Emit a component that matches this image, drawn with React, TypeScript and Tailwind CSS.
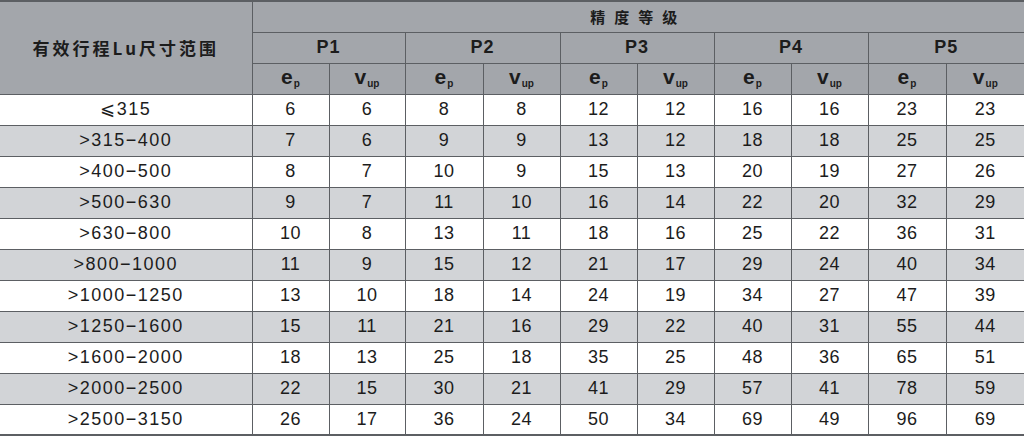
const ROWS: [string, number[]][] = [
  ["⩽315", [6, 6, 8, 8, 12, 12, 16, 16, 23, 23]],
  [">315−400", [7, 6, 9, 9, 13, 12, 18, 18, 25, 25]],
  [">400−500", [8, 7, 10, 9, 15, 13, 20, 19, 27, 26]],
  [">500−630", [9, 7, 11, 10, 16, 14, 22, 20, 32, 29]],
  [">630−800", [10, 8, 13, 11, 18, 16, 25, 22, 36, 31]],
  [">800−1000", [11, 9, 15, 12, 21, 17, 29, 24, 40, 34]],
  [">1000−1250", [13, 10, 18, 14, 24, 19, 34, 27, 47, 39]],
  [">1250−1600", [15, 11, 21, 16, 29, 22, 40, 31, 55, 44]],
  [">1600−2000", [18, 13, 25, 18, 35, 25, 48, 36, 65, 51]],
  [">2000−2500", [22, 15, 30, 21, 41, 29, 57, 41, 78, 59]],
  [">2500−3150", [26, 17, 36, 24, 50, 34, 69, 49, 96, 69]],
];

const COLS = [77, 76, 78, 77, 77, 77, 77, 77, 78, 78];
const GRADES = ["P1", "P2", "P3", "P4", "P5"];

const cell = "border border-[#5c5f63] text-center p-0";

function Sym({ base, sub }: { base: string; sub: string }) {
  return (
    <span className="font-bold text-[21px] leading-none">
      {base}
      <sub className="text-[10px] font-bold align-baseline relative top-[3px] ml-[1px]">{sub}</sub>
    </span>
  );
}

export default function App() {
  return (
    <div className="w-[1024px] h-[436px] bg-white overflow-hidden font-['Liberation_Sans','Noto_Sans_CJK_SC',sans-serif] text-[#1c1c1c]">
      <table className="table-fixed border-collapse w-[1024px] border-y-2 border-[#5c5f63]">
        <colgroup>
          <col className="w-[252px]" />
          {COLS.map((w, i) => (
            <col key={i} style={{ width: w }} />
          ))}
        </colgroup>
        <thead className="bg-[#a3a6ab]">
          <tr className="h-[31px]">
            <th rowSpan={3} className={`${cell} border-l-0 text-[17px] font-bold tracking-[3px] font-['Noto_Sans_CJK_SC',sans-serif]`}>
              有效行程Lu尺寸范围
            </th>
            <th colSpan={10} className={`${cell} border-r-0 text-[15px] font-bold tracking-[9px] font-['Noto_Sans_CJK_SC',sans-serif]`}>
              精度等级
            </th>
          </tr>
          <tr className="h-[31px]">
            {GRADES.map((g, i) => (
              <th key={g} colSpan={2} className={`${cell} ${i === 4 ? "border-r-0" : ""} text-[18px] font-bold tracking-[1px]`}>
                {g}
              </th>
            ))}
          </tr>
          <tr className="h-[31px]">
            {GRADES.map((g, i) => (
              <>
                <th key={g + "e"} className={cell}>
                  <Sym base="e" sub="p" />
                </th>
                <th key={g + "v"} className={`${cell} ${i === 4 ? "border-r-0" : ""}`}>
                  <Sym base="v" sub="up" />
                </th>
              </>
            ))}
          </tr>
        </thead>
        <tbody>
          {ROWS.map(([range, vals], r) => (
            <tr key={range} className={`h-[31px] ${r % 2 === 1 ? "bg-[#d2d4d7]" : "bg-white"}`}>
              <td className={`${cell} border-l-0 text-[18px] tracking-[1.5px]`}>{range}</td>
              {vals.map((v, i) => (
                <td key={i} className={`${cell} ${i === 9 ? "border-r-0" : ""} text-[18px] tracking-[0.5px]`}>
                  {v}
                </td>
              ))}
            </tr>
          ))}
        </tbody>
      </table>
    </div>
  );
}
